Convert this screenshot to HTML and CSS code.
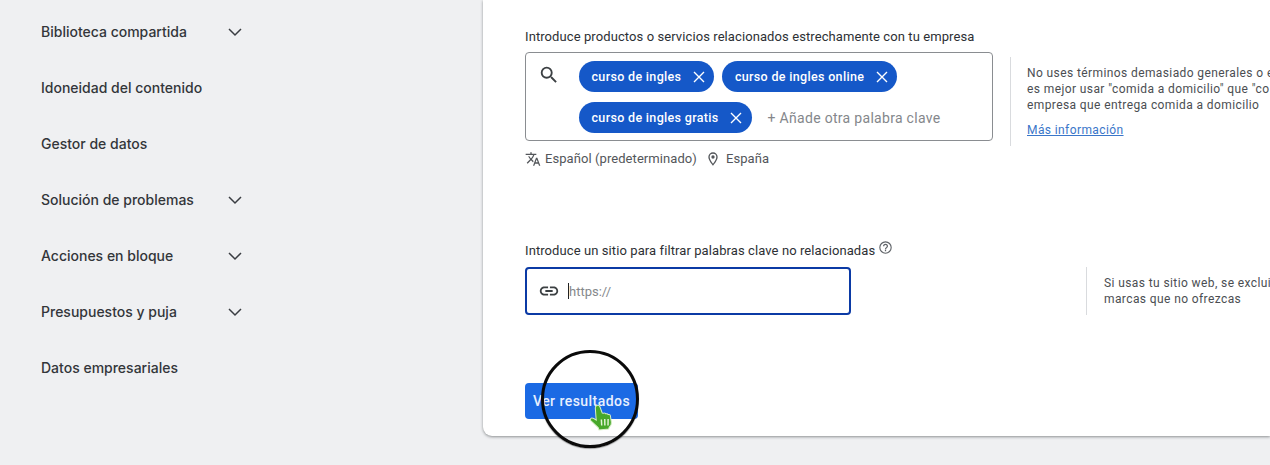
FILE: index.html
```html
<!DOCTYPE html>
<html lang="es">
<head>
<meta charset="utf-8">
<title>Palabras clave</title>
<link rel="stylesheet" href="styles.css">
</head>
<body>
<div class="page">
  <nav class="sidebar">
    <div class="nav-item"><span>Biblioteca compartida</span><svg class="chev" viewBox="0 0 16 16"><path d="M2 5l6 6 6-6"/></svg></div>
    <div class="nav-item"><span>Idoneidad del contenido</span></div>
    <div class="nav-item"><span>Gestor de datos</span></div>
    <div class="nav-item"><span>Solución de problemas</span><svg class="chev" viewBox="0 0 16 16"><path d="M2 5l6 6 6-6"/></svg></div>
    <div class="nav-item"><span>Acciones en bloque</span><svg class="chev" viewBox="0 0 16 16"><path d="M2 5l6 6 6-6"/></svg></div>
    <div class="nav-item"><span>Presupuestos y puja</span><svg class="chev" viewBox="0 0 16 16"><path d="M2 5l6 6 6-6"/></svg></div>
    <div class="nav-item"><span>Datos empresariales</span></div>
  </nav>
  <main class="card">
    <section class="row row-products">
      <div class="field">
        <div class="label">Introduce productos o servicios relacionados estrechamente con tu empresa</div>
        <div class="kw-box">
          <svg class="search" viewBox="0 0 24 24"><path d="M15.5 14h-.79l-.28-.27A6.47 6.47 0 0 0 16 9.5 6.5 6.5 0 1 0 9.5 16c1.61 0 3.09-.59 4.23-1.57l.27.28v.79l5 4.99L20.49 19l-4.99-5zm-6 0C7.01 14 5 11.99 5 9.5S7.01 5 9.5 5 14 7.01 14 9.5 11.99 14 9.5 14z"/></svg>
          <div class="chips">
            <span class="chip">curso de ingles<svg viewBox="0 0 12 12"><path d="M1 1l10 10M11 1L1 11"/></svg></span>
            <span class="chip">curso de ingles online<svg viewBox="0 0 12 12"><path d="M1 1l10 10M11 1L1 11"/></svg></span>
            <span class="chip">curso de ingles gratis<svg viewBox="0 0 12 12"><path d="M1 1l10 10M11 1L1 11"/></svg></span>
            <span class="add">+ Añade otra palabra clave</span>
          </div>
        </div>
        <div class="meta">
          <svg class="meta-icon" viewBox="0 0 24 24"><path d="M12.87 15.07l-2.54-2.51.03-.03A17.52 17.52 0 0 0 14.07 6H17V4h-7V2H8v2H1v2h11.17C11.5 7.92 10.44 9.75 9 11.35 8.07 10.32 7.3 9.19 6.69 8h-2c.73 1.63 1.73 3.17 2.98 4.56l-5.09 5.02L4 19l5-5 3.11 3.11.76-2.04zM18.5 10h-2L12 22h2l1.12-3h4.75L21 22h2l-4.5-12zm-2.62 7l1.62-4.33L19.12 17h-3.24z"/></svg>
          <span>Español (predeterminado)</span>
          <svg class="meta-icon pin" viewBox="0 0 24 24"><path d="M12 2a7 7 0 0 0-7 7c0 5.25 7 13 7 13s7-7.75 7-13a7 7 0 0 0-7-7zm0 17.2C9.9 16.6 7 12.2 7 9a5 5 0 0 1 10 0c0 3.2-2.9 7.6-5 10.2zM12 6.5a2.5 2.5 0 1 0 0 5 2.5 2.500 0 0 0 0-5z"/></svg>
          <span>España</span>
        </div>
      </div>
      <aside class="hint hint-products">
        <p>No uses términos demasiado generales o e</p>
        <p>es mejor usar "comida a domicilio" que "co</p>
        <p>empresa que entrega comida a domicilio</p>
        <a class="more" href="#">Más información</a>
      </aside>
    </section>
    <section class="row row-site">
      <div class="field-site">
        <div class="label label-site"><span>Introduce un sitio para filtrar palabras clave no relacionadas</span>
          <svg class="help" viewBox="0 0 24 24"><path d="M11 18h2v-2h-2v2zm1-16a10 10 0 1 0 0 20 10 10 0 0 0 0-20zm0 18.2a8.2 8.2 0 1 1 0-16.4 8.2 8.2 0 0 1 0 16.4zM12 6a4 4 0 0 0-4 4h2a2 2 0 1 1 4 0c0 2-3 1.750-3 5h2c0-2.250 3-2.500 3-5a4 4 0 0 0-4-4z"/></svg>
        </div>
        <div class="url-box">
          <svg class="link" viewBox="0 0 24 24"><path d="M3.900 12c0-1.710 1.390-3.100 3.100-3.100h4V7H7c-2.760 0-5 2.240-5 5s2.240 5 5 5h4v-1.900H7c-1.710 0-3.100-1.390-3.100-3.100zM8 13h8v-2H8v2zm9-6h-4v1.900h4c1.710 0 3.100 1.390 3.100 3.100s-1.390 3.100-3.100 3.100h-4V17h4c2.760 0 5-2.240 5-5s-2.240-5-5-5z"/></svg>
          <span class="caret"></span><span class="placeholder">https://</span>
        </div>
      </div>
      <aside class="hint hint-site">
        <p>Si usas tu sitio web, se exclui</p>
        <p>marcas que no ofrezcas</p>
      </aside>
    </section>
    <div class="cta"><button class="btn" type="button">Ver resultados</button></div>
  </main>
</div>
<div class="spotlight"></div>
<svg class="cursor" viewBox="0 0 24 28" preserveAspectRatio="none">
  <path class="hand" d="M7 2.500c1.300-.6 2.400.2 2.800 1.500l2 6.200 1 .1c.8-.5 1.800-.2 2.200.6.8-.4 1.700-.1 2.100.7.9-.3 1.700.2 1.900 1.200l.9 6.300c.3 2.300-.7 4-2 5.300l-.4 1.600-8.600 1-.8-2.400C6 22.600 3.400 19.600 1.500 17.600.8 16.600 1.300 15.300 2.400 15c1-.2 2.300.6 4 2.100L5.600 4.900C5.500 3.800 6 3 7 2.500z"/>
  <path class="lines" d="M11 16.500l.3 6M14 16l.1 6.500M17 16l-.1 6.500"/>
</svg>
</body>
</html>
```

FILE: styles.css
```css
* { box-sizing: border-box; }
html, body { margin: 0; height: 465px; overflow: hidden; background: #eff0f2; }
body { position: relative; font-family: Roboto, "Liberation Sans", sans-serif; }
.page { display: flex; height: 465px; }

.sidebar { width: 483px; flex: none; padding-top: 4px; }
.nav-item { height: 56px; padding-left: 41px; width: 243px; display: flex; align-items: center; justify-content: space-between; font-family: Inter, "Liberation Sans", sans-serif; font-size: 14px; font-weight: 500; letter-spacing: 0; line-height: 16px; color: #33363a; }
.chev { width: 16px; height: 16px; fill: none; stroke: #3a3d42; stroke-width: 1.5; }

.card { flex: 1; min-width: 0; height: 436px; background: #fff; border-bottom-left-radius: 9px; box-shadow: 0 1px 3px rgba(60,64,67,.55); padding-left: 42px; overflow: hidden; }
.row { display: flex; white-space: nowrap; }
.row-products { padding-top: 29px; height: 240px; }
.field { width: 468px; flex: none; }
.label { font-size: 13px; line-height: 16px; letter-spacing: .09px; color: #2d3034; }
.kw-box { margin-top: 7px; height: 89px; border: 1px solid #8a8d91; border-radius: 4px; display: flex; padding: 8px 0 0 12px; }
.search { width: 22px; height: 22px; margin-top: 3px; flex: none; fill: #3c4043; }
.chips { margin-left: 19px; display: flex; flex-wrap: wrap; align-items: center; gap: 10px 8px; width: 420px; align-content: flex-start; }
.chip { height: 31px; border-radius: 16px; background: #1558c8; color: #fff; font-size: 12.5px; font-weight: 500; letter-spacing: .33px; display: inline-flex; align-items: center; gap: 11.5px; padding: 0 9.500px 0 12.5px; }
.chip svg { width: 12px; height: 12px; fill: none; stroke: #fff; stroke-width: 1.4; }
.add { margin-left: 8px; font-size: 14px; letter-spacing: .3px; color: #84878b; }
.meta { margin-top: 10px; display: flex; align-items: center; font-size: 13px; line-height: 16px; letter-spacing: .07px; color: #53565a; }
.meta-icon { width: 16px; height: 16px; fill: #53565a; margin-right: 4px; flex: none; }
.pin { margin-left: 8px; margin-right: 5px; }

.hint { border-left: 1px solid #d9dbde; font-size: 12px; line-height: 16px; letter-spacing: .4px; color: #4b4e52; }
.hint p { margin: 0; }
.hint-products { margin: 28px 0 0 17px; height: 89px; padding: 8px 0 0 16px; }
.more { display: inline-block; margin-top: 9px; color: #3a76c9; text-decoration: underline; }

.row-site { height: 123px; }
.field-site { width: 326px; flex: none; }
.label-site { white-space: nowrap; display: flex; align-items: flex-start; gap: 3px; height: 27px; padding-top: 3px; }
.help { width: 15px; height: 15px; flex: none; fill: #5f6368; margin-top: -3px; }
.url-box { height: 48px; border: 2px solid #0b3aa5; border-radius: 4px; display: flex; align-items: center; padding-left: 11px; }
.link { width: 22px; height: 22px; fill: #3c4043; flex: none; }
.caret { width: 1px; height: 16px; background: #222; margin-left: 8px; }
.placeholder { font-size: 13px; color: #85888c; }
.hint-site { margin: 27px 0 0 235px; height: 48px; padding: 8px 0 0 17px; }

.cta { padding-top: 20px; }
.btn { width: 113px; height: 36px; border: 0; border-radius: 4px; background: #1b6ae4; color: #e8f0fe; font-family: Roboto, "Liberation Sans", sans-serif; font-size: 14px; font-weight: 500; letter-spacing: .45px; padding: 0; }

.spotlight { position: absolute; left: 541px; top: 350px; width: 98px; height: 98px; border: 3px solid #0a0a0a; border-radius: 50%; box-shadow: 0 1px 1px rgba(0,0,0,.35); }
.cursor { position: absolute; left: 589px; top: 403px; width: 27px; height: 28px; }
.hand { fill: #47a82a; stroke: #d9efc9; stroke-width: .9; }
.lines { fill: none; stroke: #e4f3d8; stroke-width: 1.3; }
```
